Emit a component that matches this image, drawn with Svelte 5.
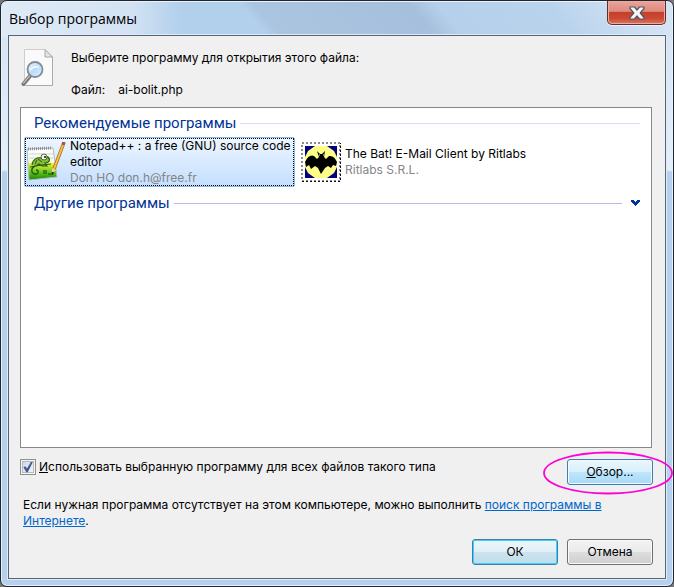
<script>
  let always = $state(true);
  let selected = $state('notepad');
</script>

<div class="window">
  <header>
    <h1>Выбор программы</h1>
    <button class="close" aria-label="Закрыть">
      <svg width="16" height="14" viewBox="0 0 16 14">
        <path d="M1 1H5.500L8 4 10.500 1H15V2.500L11.200 7l3.800 4.500V13H10.500L8 10 5.500 13H1V11.500L4.800 7 1 2.500Z" fill="#f6f6f6" stroke="#535666" stroke-width="1.2" stroke-linejoin="round" />
      </svg>
    </button>
  </header>

  <main>
    <section class="intro">
      <svg width="34" height="40" viewBox="0 0 34 40" aria-hidden="true">
        <defs>
          <linearGradient id="lens" x1="0" y1="0" x2="1" y2="1">
            <stop offset="0" stop-color="#f0f8ff" /><stop offset=".5" stop-color="#b9dcfa" /><stop offset="1" stop-color="#e5f4ff" />
          </linearGradient>
        </defs>
        <path d="M3.500 1.500H24L31.500 9V37.500H3.500Z" fill="#fafafa" stroke="#cecece" />
        <path d="M31.500 9V37.500H5" fill="none" stroke="#aaa" />
        <path d="M24 1.500V9H31.500Z" fill="#e4e4e4" stroke="#a8a8a8" />
        <path d="M9 28L2.500 36" stroke="#777" stroke-width="4" stroke-linecap="round" />
        <path d="M8.500 28L2.500 35" stroke="#bbb" stroke-width="1.300" stroke-linecap="round" />
        <circle cx="14" cy="21.500" r="7.500" fill="url(#lens)" stroke="#858b93" stroke-width="1.800" />
        <path d="M9 22q3-4 9-3" fill="none" stroke="#fff" stroke-width="1.500" opacity=".8" />
      </svg>
      <div>
        <p>Выберите программу для открытия этого файла:</p>
        <p class="file"><span>Файл:</span><span>ai-bolit.php</span></p>
      </div>
    </section>

    <section class="list">
      <h2>Рекомендуемые программы</h2>
      <div class="programs">
        <button class="program" class:selected={selected === 'notepad'} onclick={() => (selected = 'notepad')}>
          <svg width="40" height="40" viewBox="0 0 40 40" aria-hidden="true">
            <defs>
              <linearGradient id="grass" x1="0" y1="0" x2="0" y2="1">
                <stop offset="0" stop-color="#fff" /><stop offset=".45" stop-color="#f4f7e6" /><stop offset=".52" stop-color="#dce93c" /><stop offset=".75" stop-color="#65c719" /><stop offset="1" stop-color="#16830b" />
              </linearGradient>
            </defs>
            <path d="M1 7L27 6 31 35 3 38Z" fill="url(#grass)" stroke="#b4bbbd" />
            <path d="M2 7L26 6" stroke="#8d8d8d" stroke-width="3" stroke-dasharray="1 1" />
            <path d="M3 12H27M3 16H27" stroke="#b5c5d2" stroke-width=".7" />
            <path d="M4 22H29" stroke="#eaf50f" stroke-width="2" />
            <path d="M6 23C7 17 11 15 16 16Q18 13 22 15C25 18 23 21 19 21L21 24H16L13 22 10 24" fill="#83c236" stroke="#24541a" stroke-width="1.100" />
            <path d="M9 24Q5 26 6 30Q9 34 12 31Q13 28 10 28" fill="none" stroke="#285d13" stroke-width="1.400" />
            <circle cx="18" cy="15" r="3" fill="#edf5df" stroke="#374636" stroke-width=".8" /><circle cx="19" cy="15" r="1" fill="#111" />
            <path d="M4 25L16 23 25 22M11 18L9 22M16 20L12 17" fill="none" stroke="#2b5711" />
            <path d="M18 28V32M20 28V32M22 32H27M27 30V32" stroke="#173f10" />
            <path d="M37 3L28 27" stroke="#a66d1c" stroke-width="3.500" />
            <path d="M37 3L28 27" stroke="#f8c04a" stroke-width="2" />
            <path d="M38 0L37 3" stroke="#a85151" stroke-width="3.500" />
            <path d="M26 26L30 28 26 32Z" fill="#edcf98" /><path d="M26 30V33L28 30Z" fill="#222" />
          </svg>
          <span class="label">
            <span>Notepad++ : a free (GNU) source code editor</span>
            <span class="vendor">Don HO don.h@free.fr</span>
          </span>
        </button>
        <button class="program" class:selected={selected === 'bat'} onclick={() => (selected = 'bat')}>
          <svg width="40" height="40" viewBox="0 0 40 40" aria-hidden="true">
            <rect x="1" y="1" width="38" height="38" fill="#fff" stroke="#8c8c8c" stroke-width="2" stroke-dasharray="2 2" />
            <path d="M1 39.500H39.500V1" fill="none" stroke="#111" stroke-dasharray="2 2" />
            <rect x="2" y="2" width="36" height="36" fill="#fff" />
            <rect x="4" y="4" width="32" height="32" fill="#000080" />
            <path d="M14 4H26L33 9 36 15V25L33 31 26 36H14L7 31 4 25V15L7 9Z" fill="#ffff87" />
            <path d="M16 9L19 12H21L24 9 23 15 25 17 28 14Q33 13 36 20L35 24 32 23 30 26 27 24 24 26 20 32 17 26 14 24 10 27 8 23 5 25 4 20Q8 12 13 14L16 17 18 15Z" fill="#000" />
            <path d="M18 13H19M22 13H23" stroke="#ffff87" />
          </svg>
          <span class="label">
            <span>The Bat! E-Mail Client by Ritlabs</span>
            <span class="vendor">Ritlabs S.R.L.</span>
          </span>
        </button>
      </div>
      <h2 class="other">Другие программы
        <button class="expand" aria-label="Развернуть">
          <svg width="9" height="6" viewBox="0 0 9 6" shape-rendering="crispEdges"><path d="M0 0H3V1H4V2H5V1H6V0H9V2H8V3H7V4H6V5H5V6H4V5H3V4H2V3H1V2H0Z" fill="#003399" /></svg>
        </button>
      </h2>
    </section>

    <div class="options">
      <label><input type="checkbox" bind:checked={always} /><span><u>И</u>спользовать выбранную программу для всех файлов такого типа</span></label>
      <div class="browse">
        <button class="command hot"><u>О</u>бзор...</button>
        <svg class="mark" width="130" height="44" viewBox="0 0 130 44" aria-hidden="true"><ellipse cx="65" cy="22" rx="64" ry="20.500" fill="none" stroke="#ff00d4" stroke-width="1.800" /></svg>
      </div>
    </div>

    <p class="hint">Если нужная программа отсутствует на этом компьютере, можно выполнить <a href="#search">поиск программы в Интернете</a>.</p>

    <footer>
      <button class="command default">ОК</button>
      <button class="command">Отмена</button>
    </footer>
  </main>
</div>

<style>
  :global(body) {
    background: #777;
  }
  * {
    box-sizing: border-box;
  }
  h1, h2, p {
    margin: 0;
    font-weight: normal;
  }
  button {
    font: inherit;
    color: inherit;
    padding: 0;
  }
  svg {
    display: block;
    flex: none;
  }
  .window {
    min-height: 100vh;
    display: flex;
    flex-direction: column;
    padding: 0 7px 7px;
    border: 1px solid #22252c;
    border-radius: 7px;
    box-shadow: inset 0 0 0 1px #e4f3ff;
    background:
      linear-gradient(90deg, #dfeaf6 0, #d3e3f4 130px, transparent 180px) top / 100% 36px no-repeat,
      linear-gradient(50deg, #b4d0eb 0, #b2cfeb 38%, #abc5e1 40%, #a6bfdc 62%, #b6cfea 66%, #bad3ed 82%, #d5e4f3 96%) top / 100% 36px no-repeat,
      linear-gradient(#d3e2f2, #e4effa 169px, transparent 171px) right / 7px 100% no-repeat,
      linear-gradient(#d3e2f2, #e4effa 169px, transparent 171px) left / 7px 100% no-repeat,
      #b5d1ee;
    font: 12px/16px Inter, "DejaVu Sans Condensed", sans-serif;
    color: #000;
  }
  header {
    height: 34px;
    display: flex;
    justify-content: space-between;
    align-items: flex-start;
  }
  h1 {
    font: 14px/20px "Open Sans", "Noto Sans", sans-serif;
    padding-top: 8px;
    padding-left: 1px;
  }
  .close {
    width: 59px;
    height: 24px;
    display: flex;
    justify-content: center;
    align-items: center;
    border: 1px solid #642a2c;
    border-top: 0;
    border-radius: 0 0 5px 5px;
    box-shadow: inset 0 0 0 1px #efaba0, 0 1px 0 #e5f2ff;
    background: linear-gradient(#e9a59b, #de8a7e 45%, #c53f2b 50%, #cb4832 75%, #d97860);
  }
  main {
    flex: 1;
    display: flex;
    flex-direction: column;
    padding: 12px 12px 13px 11px;
    border: 1px solid #596473;
    box-shadow: 0 0 0 1px #dcecfb;
    background: #f0f0f0;
  }
  .intro {
    display: flex;
    gap: 16px;
    padding: 0 0 9px 1px;
  }
  .intro > div {
    padding-top: 2px;
  }
  .file {
    display: flex;
    gap: 13px;
    margin-top: 16px;
  }
  .list {
    flex: 1;
    margin-right: 1px;
    padding: 4px 3px;
    border: 1px solid #828790;
    background: #fff;
  }
  h2 {
    display: flex;
    align-items: center;
    gap: 4px;
    height: 22px;
    padding: 0 8px 0 10px;
    font: 15px/20px Roboto, "Open Sans", sans-serif;
    color: #003399;
  }
  h2::after {
    content: "";
    flex: 1;
    height: 1px;
    background: #d5dff5;
  }
  .other::after {
    background: #b3bbdf;
  }
  .expand {
    order: 1;
    border: 0;
    background: none;
    margin-left: 5px;
  }
  .programs {
    display: flex;
    gap: 4px;
    padding: 3px 0 5px;
  }
  .program {
    width: 271px;
    height: 50px;
    display: flex;
    align-items: center;
    gap: 4px;
    padding: 0 1px;
    border: 1px solid transparent;
    border-radius: 2px;
    background: none;
    text-align: left;
  }
  .program.selected {
    border-color: #8ab8e4;
    outline: 1px dotted #000;
    outline-offset: -2px;
    background: linear-gradient(#edf5ff, #c4dfff);
  }
  .label {
    display: flex;
    flex-direction: column;
    flex: 1;
  }
  .vendor {
    color: #858585;
  }
  .options {
    display: flex;
    justify-content: space-between;
    align-items: flex-start;
    padding-top: 11px;
  }
  label {
    display: flex;
    align-items: center;
    gap: 3px;
  }
  input {
    appearance: none;
    width: 16px;
    height: 16px;
    margin: 0;
    border: 1px solid #8e8f8f;
    box-shadow: inset 0 0 0 1px #f4f4f4, inset 0 0 0 2px #b6bbc3;
    background: linear-gradient(135deg, #d0d5dc, #f8f8f8);
  }
  input:checked::before {
    content: "";
    display: block;
    width: 12px;
    height: 12px;
    margin: 1px;
    background: #405b9d;
    clip-path: polygon(12% 52%, 28% 43%, 41% 62%, 74% 8%, 90% 8%, 48% 94%, 36% 94%);
  }
  .command {
    width: 86px;
    height: 26px;
    border: 1px solid #707070;
    border-radius: 3px;
    box-shadow: inset 0 0 0 1px #fafafa;
    background: linear-gradient(#f3f3f3, #ebebeb 49%, #dddddd 50%, #cfcfcf);
  }
  .hot {
    border-color: #3c7fb1;
    box-shadow: inset 0 0 0 1px #f1faff;
    background: linear-gradient(#eaf6fd, #d9f0fc 49%, #bee6fd 50%, #a7d9f5);
  }
  .default {
    border-color: #3c7fb1;
    box-shadow: inset 0 0 0 1px #3fd0fa;
    background: linear-gradient(#eef6fa, #e0f0f6 49%, #cce4ef 50%, #bfdce8);
  }
  .browse {
    position: relative;
  }
  .mark {
    position: absolute;
    top: -8px;
    right: -20px;
    pointer-events: none;
  }
  .hint {
    padding: 12px 40px 10px 3px;
  }
  a {
    color: #0066cc;
  }
  footer {
    display: flex;
    justify-content: flex-end;
    gap: 9px;
  }
</style>
